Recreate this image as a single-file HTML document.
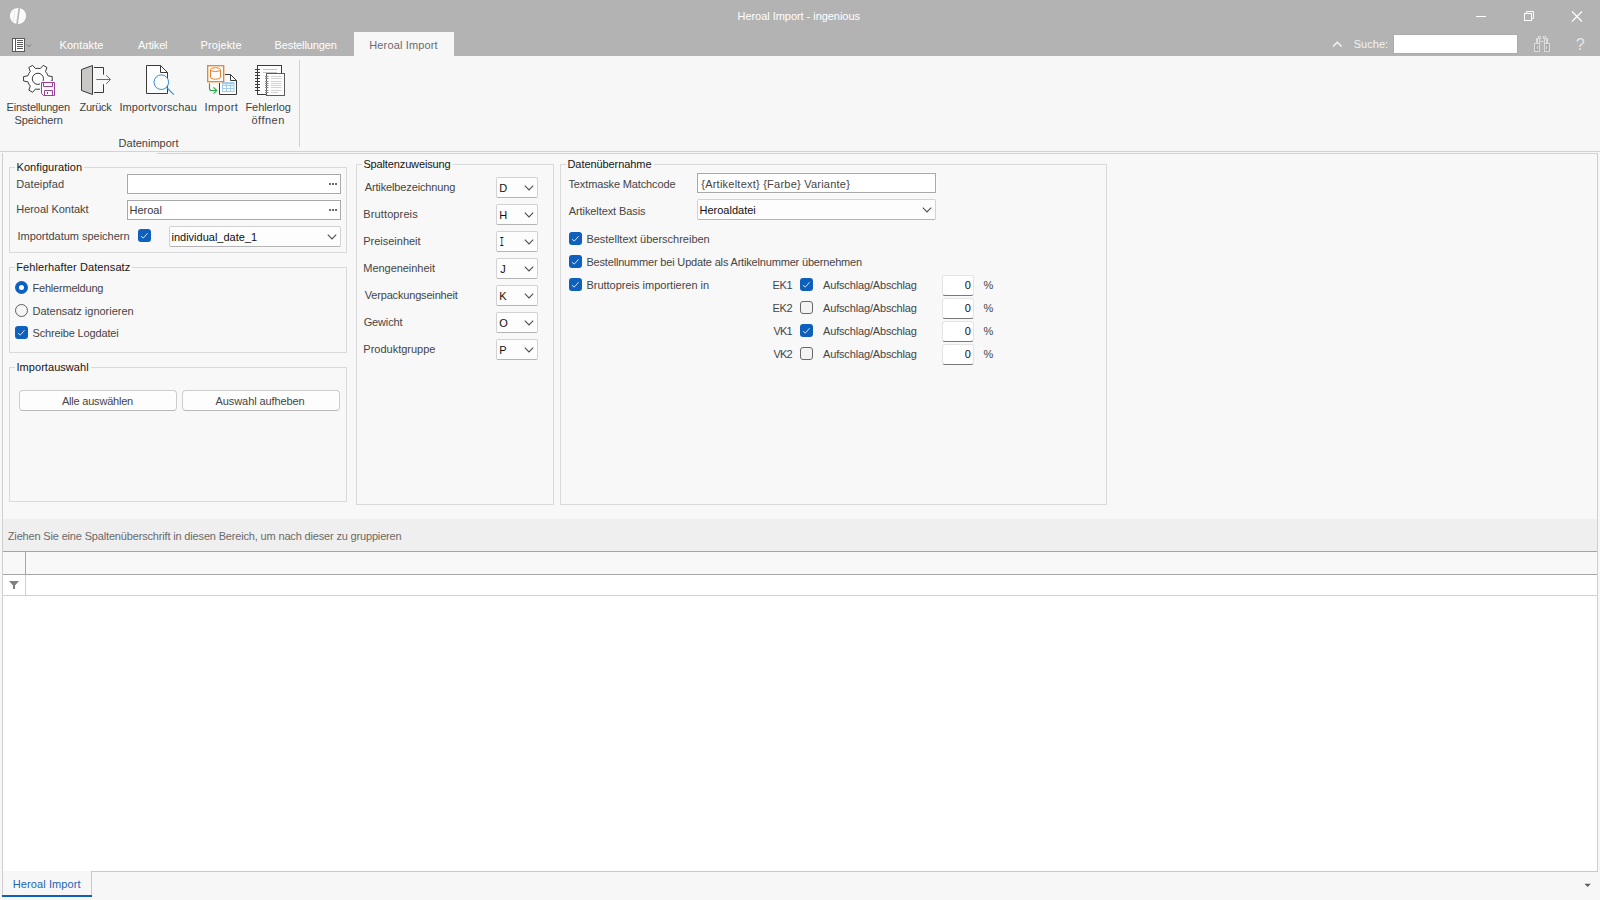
<!DOCTYPE html>
<html lang="de"><head><meta charset="utf-8"><title>Heroal Import - ingenious</title>
<style>
html,body{margin:0;padding:0}
body{width:1600px;height:900px;position:relative;overflow:hidden;background:#f7f7f7;font-family:"Liberation Sans",sans-serif;font-size:11px;line-height:13px}
.t{position:absolute;white-space:pre;font-size:11px;line-height:13px}
.b{position:absolute;box-sizing:border-box}
.grp{position:absolute;box-sizing:border-box;border:1px solid #dadada}
.gap{position:absolute;height:3px;background:#f8f8f8}
.inp{position:absolute;box-sizing:border-box;border:1px solid #a8a8a8;background:#fff;box-shadow:0 0 0 1px #fbfbfb}
.cmb{position:absolute;box-sizing:border-box;border:1px solid #d2d2d2;border-bottom-color:#b4b4b4;border-radius:2px;background:#fdfdfd}
.num{position:absolute;box-sizing:border-box;border:1px solid #e4e4e4;border-bottom:1px solid #787878;border-radius:3px;background:#fff;width:32px;height:21px}
.btn{position:absolute;box-sizing:border-box;border:1px solid #cdcdcd;border-bottom-color:#b8b8b8;border-radius:4px;background:#fdfdfd}
.cb{position:absolute;box-sizing:border-box;width:13px;height:13px;border-radius:3px;background:#0f5fbd}
.cb.off{background:#f3f3f3;border:1px solid #686868}
svg{position:absolute;overflow:visible}

</style></head>
<body>
<!-- title bar -->
<div class="b" style="left:0;top:0;width:1600px;height:56px;background:#b3b3b3"></div>
<div class="b" style="left:354px;top:32px;width:100px;height:24px;background:#f7f7f7"></div>
<div class="b" style="left:1393px;top:34px;width:125px;height:20px;background:#fff;border:1px solid #ababab"></div>
<svg style="left:0;top:0" width="1600" height="56" viewBox="0 0 1600 56">
  <!-- logo -->
  <circle cx="18" cy="16" r="8.1" fill="#fbfbfb"/>
  <path d="M14.800 10.200L13.400 21.500" stroke="#ececec" stroke-width="1" fill="none"/>
  <path d="M19.400 7.600L17.000 24.400" stroke="#b6b6b6" stroke-width="1.700" fill="none"/>
  <!-- menu icon -->
  <rect x="12.5" y="38.5" width="12" height="13" fill="#fff" stroke="#5a5a5a" stroke-width="1"/>
  <path d="M15.5 38.5V51.5" stroke="#5a5a5a" stroke-width="1"/>
  <path d="M17 40.5H23M17 42.5H23M17 44.5H23M17 46.5H23M17 48.5H23" stroke="#5a5a5a" stroke-width="1"/>
  <path d="M26.600 44.400L29 46.700L31.400 44.400" stroke="#7c7c7c" stroke-width="1" fill="none"/>
  <!-- window buttons -->
  <path d="M1476 16.5H1486" stroke="#fff" stroke-width="1"/>
  <path d="M1526.500 13.500V11.500H1533.500V18.500H1531.500" stroke="#fff" stroke-width="1" fill="none"/>
  <rect x="1524.500" y="13.500" width="7" height="7" stroke="#fff" stroke-width="1" fill="none"/>
  <path d="M1572 11.500L1582 21.500M1582 11.500L1572 21.500" stroke="#fff" stroke-width="1.1" fill="none"/>
  <!-- caret -->
  <path d="M1333 46.5L1337.300 42.200L1341.600 46.500" stroke="#f4f4f4" stroke-width="1.5" fill="none"/>
  <!-- binoculars -->
  <g stroke="#dcdcdc" stroke-width="1" fill="none">
    <rect x="1534.500" y="43.500" width="5" height="8" fill="#ababab"/>
    <rect x="1544.500" y="43.500" width="5" height="8" fill="#ababab"/>
    <rect x="1536.500" y="38.500" width="3" height="5"/>
    <rect x="1544.500" y="38.500" width="3" height="5"/>
    <rect x="1538.500" y="36.500" width="2" height="2"/>
    <rect x="1543.500" y="36.500" width="2" height="2"/>
    <path d="M1540.500 41.500H1543.500M1537.500 46V49M1546.500 46V49M1537.500 39V43M1546.500 39V43"/>
  </g>
</svg>
<!-- ribbon -->
<div class="b" style="left:0;top:151px;width:1600px;height:1px;background:#d3d3d3"></div>
<div class="b" style="left:299px;top:60px;width:1px;height:87px;background:#d2d2d2"></div>
<svg style="left:0;top:56px" width="320" height="95" viewBox="0 56 320 95">
  <!-- gear + floppy -->
  <g id="gear" fill="#fdfdfd" stroke="#3a3a3a" stroke-width="1">
    <path d="M47.96 75.80L52.24 76.63 L52.24 80.97 L47.96 81.80A10.5 10.5 0 0 1 45.53 86.01L46.95 90.13 L43.19 92.30 L40.33 89.01A10.5 10.5 0 0 1 35.47 89.01L32.61 92.30 L28.85 90.13 L30.27 86.01A10.5 10.5 0 0 1 27.84 81.80L23.56 80.97 L23.56 76.63 L27.84 75.80A10.5 10.5 0 0 1 30.27 71.59L28.85 67.47 L32.61 65.30 L35.47 68.59A10.5 10.5 0 0 1 40.33 68.59L43.19 65.30 L46.95 67.47 L45.53 71.59A10.5 10.5 0 0 1 47.96 75.80 Z"/>
    <circle cx="37.900" cy="78.800" r="5.600"/>
  </g>
  <rect x="40" y="81" width="16" height="16" fill="#f9f9f9"/>
  <g fill="#fdfdfd" stroke="#9c3f9c" stroke-width="1">
    <path d="M41.500 82.500H54.500V95.500H43.500L41.500 93.500Z"/>
    <path d="M43.500 82.500V86.500H52.500V82.500" fill="none"/>
    <path d="M44.500 95.500V90.500H52.500V95.500" fill="none"/>
    <path d="M47.500 92V94" fill="none"/>
  </g>
  <!-- door -->
  <path d="M81.500 69.500L92.500 65.500V94.500L81.500 90.500Z" fill="#c8c7c5" stroke="#3a3a3a" stroke-width="1"/>
  <path d="M94 67.500H103.500V74.700M103.500 84.200V92.500H94" fill="none" stroke="#3a3a3a" stroke-width="1"/>
  <path d="M96.300 79.500H110.200M106.200 75.200L110.500 79.500L106.200 83.800" fill="none" stroke="#e8373c" stroke-width="1"/>
  <!-- doc + magnifier -->
  <path d="M146.500 65.500H160.500L167.500 72.500V93.500H146.500Z" fill="#fdfdfd" stroke="#3a3a3a" stroke-width="1"/>
  <path d="M160.500 65.500V72.500H167.500" fill="none" stroke="#3a3a3a" stroke-width="1"/>
  <circle cx="161.300" cy="82.200" r="7.300" fill="#fdfdfd" stroke="#2f8fd3" stroke-width="1"/>
  <path d="M166.600 87.500L173.800 94.700" stroke="#2f8fd3" stroke-width="1.1" fill="none"/>
  <!-- import -->
  <path d="M219.500 83V94.500H236.500V80.500L230.500 74.500H225" fill="#fdfdfd" stroke="#3a3a3a" stroke-width="1"/>
  <path d="M230.500 74.500V80.500H236.500" fill="none" stroke="#3a3a3a" stroke-width="1"/>
  <g stroke="#a3cdea" stroke-width="1" fill="none">
    <rect x="222.500" y="82.500" width="11.500" height="9"/>
    <path d="M222.500 85.500H234M222.500 88.500H234M226.500 82.500V91.500M230.500 82.500V91.500"/>
    <path d="M222.500 83.500H234" stroke-width="1.500"/>
  </g>
  <rect x="207.700" y="65.700" width="16" height="16" fill="#fdfdfd" stroke="#e8802a" stroke-width="1.300"/>
  <g stroke="#e8802a" stroke-width="1" fill="none">
    <ellipse cx="215.500" cy="69.600" rx="5" ry="1.900"/>
    <path d="M210.500 69.600V77.200C210.500 79.800 220.500 79.800 220.500 77.200V69.600"/>
  </g>
  <path d="M209.500 83.200V88.500Q209.500 90.500 211.500 90.500H216.300M213.500 87.300L216.800 90.500L213.500 93.700" fill="none" stroke="#27a844" stroke-width="1.100"/>
  <!-- notebook -->
  <rect x="257.500" y="65.500" width="24" height="29" fill="#fdfdfd" stroke="#3a3a3a" stroke-width="1"/>
  <path d="M255 69.500H260M255 72.500H260M255 75.500H260M255 78.500H260M255 81.500H260M255 84.500H260M255 87.500H260M255 90.500H260" stroke="#3a3a3a" stroke-width="1"/>
  <path d="M263 69.500H277M263 72.500H277" stroke="#c4c4c4" stroke-width="1"/>
  <rect x="266.500" y="73.500" width="18" height="22" fill="#fdfdfd" stroke="#5c5c5c" stroke-width="1"/>
  <path d="M271 76.500H281.500M271 78.500H281.500M271 81.500H281.500M271 83.500H281.500M271 85.500H281.500M271 87.500H281.500M271 90.500H281.500M271 92.500H278" stroke="#d2d2d2" stroke-width="1"/>
  <path d="M265 76.500H268.500M265 78.500H268.500M265 81.500H268.500M265 83.500H268.500M265 85.500H268.500M265 87.500H268.500M265 90.500H268.500M265 92.500H268.500" stroke="#8a8a8a" stroke-width="1"/>
</svg>
<!-- content panel -->
<div class="b" style="left:2px;top:153px;width:1596px;height:719px;border-left:1px solid #cfcfcf;border-right:1px solid #cfcfcf;background:#f8f8f8"></div>
<div class="b" style="left:157px;top:153px;width:1441px;height:1px;background:#d3d3d3"></div>
<!-- group boxes -->
<div class="grp" style="left:9px;top:167px;width:338px;height:86px"></div>
<div class="grp" style="left:9px;top:267px;width:338px;height:86px"></div>
<div class="grp" style="left:9px;top:367px;width:338px;height:135px"></div>
<div class="grp" style="left:356px;top:164px;width:198px;height:341px"></div>
<div class="grp" style="left:560px;top:164px;width:547px;height:341px"></div>
<div class="gap" style="left:15px;top:166px;width:69px"></div>
<div class="gap" style="left:15px;top:266px;width:117px"></div>
<div class="gap" style="left:15px;top:366px;width:76px"></div>
<div class="gap" style="left:362px;top:163px;width:91px"></div>
<div class="gap" style="left:566px;top:163px;width:88px"></div>
<!-- Konfiguration -->
<div class="inp" style="left:127px;top:174px;width:214px;height:20px"></div>
<div class="inp" style="left:127px;top:200px;width:214px;height:20px"></div>
<svg style="left:0;top:0" width="1200" height="600" viewBox="0 0 1200 600">
  <g fill="#6a6a6a">
    <rect x="329" y="183" width="2" height="2"/><rect x="332" y="183" width="2" height="2"/><rect x="335" y="183" width="2" height="2"/>
    <rect x="329" y="209" width="2" height="2"/><rect x="332" y="209" width="2" height="2"/><rect x="335" y="209" width="2" height="2"/>
  </g>
</svg>
<div class="cb" style="left:138px;top:229px"></div>
<div class="cmb" style="left:169px;top:226px;width:172px;height:21px"></div>
<!-- Fehlerhafter -->
<div class="b" style="left:15px;top:281px;width:13px;height:13px;border-radius:50%;background:#0f5fbd"></div>
<div class="b" style="left:19px;top:285px;width:5px;height:5px;border-radius:50%;background:#fff"></div>
<div class="b" style="left:15px;top:304px;width:13px;height:13px;border-radius:50%;background:#f6f6f6;border:1px solid #5e5e5e"></div>
<div class="cb" style="left:15px;top:326px"></div>
<!-- Importauswahl -->
<div class="btn" style="left:19px;top:390px;width:158px;height:21px"></div>
<div class="btn" style="left:182px;top:390px;width:158px;height:21px"></div>
<!-- Spaltenzuweisung combos -->
<div class="cmb" style="left:496px;top:177px;width:42px;height:21px"></div>
<div class="cmb" style="left:496px;top:204px;width:42px;height:21px"></div>
<div class="cmb" style="left:496px;top:231px;width:42px;height:21px"></div>
<div class="cmb" style="left:496px;top:258px;width:42px;height:21px"></div>
<div class="cmb" style="left:496px;top:285px;width:42px;height:21px"></div>
<div class="cmb" style="left:496px;top:312px;width:42px;height:21px"></div>
<div class="cmb" style="left:496px;top:339px;width:42px;height:21px"></div>

<!-- Datenuebernahme -->
<div class="inp" style="left:697px;top:173px;width:239px;height:20px"></div>
<div class="cmb" style="left:697px;top:199px;width:239px;height:21px"></div>
<div class="cb" style="left:569px;top:232px"></div>
<div class="cb" style="left:569px;top:255px"></div>
<div class="cb" style="left:569px;top:278px"></div>
<div class="cb" style="left:800px;top:278px"></div>
<div class="cb off" style="left:800px;top:301px"></div>
<div class="cb" style="left:800px;top:324px"></div>
<div class="cb off" style="left:800px;top:347px"></div>
<div class="num" style="left:942px;top:275px"></div>
<div class="num" style="left:942px;top:298px"></div>
<div class="num" style="left:942px;top:321px"></div>
<div class="num" style="left:942px;top:344px"></div>
<!-- checks & chevrons -->
<svg style="left:0;top:0" width="1200" height="600" viewBox="0 0 1200 600">
  <g fill="none" stroke="#e6eef9" stroke-width="0.9">
    <path d="M141.0 236.2L143.3 238.1L147.6 233.2"/>
<path d="M18.0 333.2L20.3 335.1L24.6 330.2"/>
<path d="M572.0 239.2L574.3 241.1L578.6 236.2"/>
<path d="M572.0 262.2L574.3 264.1L578.6 259.2"/>
<path d="M572.0 285.2L574.3 287.1L578.6 282.2"/>
<path d="M803.0 285.2L805.3 287.1L809.6 282.2"/>
<path d="M803.0 331.2L805.3 333.1L809.6 328.2"/>

  </g>
  <g fill="none" stroke="#4c4c4c" stroke-width="1.05">
    <path d="M327.8 234.7L332.0 238.9L336.2 234.7"/>
<path d="M922.8 207.7L927.0 211.9L931.2 207.7"/>
<path d="M524.8 185.7L529.0 189.9L533.2 185.7"/>
<path d="M524.8 212.7L529.0 216.9L533.2 212.7"/>
<path d="M524.8 239.7L529.0 243.9L533.2 239.7"/>
<path d="M524.8 266.7L529.0 270.9L533.2 266.7"/>
<path d="M524.8 293.7L529.0 297.9L533.2 293.7"/>
<path d="M524.8 320.7L529.0 324.9L533.2 320.7"/>
<path d="M524.8 347.7L529.0 351.9L533.2 347.7"/>

  </g>
</svg>
<!-- grid -->
<div class="b" style="left:3px;top:519px;width:1594px;height:32px;background:#efefef"></div>
<div class="b" style="left:3px;top:551px;width:1594px;height:1px;background:#a6a6a6"></div>
<div class="b" style="left:3px;top:552px;width:1594px;height:22px;background:#f8f8f8"></div>
<div class="b" style="left:3px;top:574px;width:1594px;height:1px;background:#a6a6a6"></div>
<div class="b" style="left:3px;top:575px;width:1594px;height:296px;background:#fff"></div>
<div class="b" style="left:3px;top:595px;width:1594px;height:1px;background:#d0d0d0"></div>
<div class="b" style="left:25px;top:552px;width:1px;height:22px;background:#a6a6a6"></div>
<div class="b" style="left:25px;top:575px;width:1px;height:20px;background:#d0d0d0"></div>
<svg style="left:0;top:570px" width="40" height="30" viewBox="0 570 40 30">
  <path d="M9 581H19L15 585.400V589H13V585.400Z" fill="#808080"/>
</svg>
<!-- bottom tab strip -->
<div class="b" style="left:0;top:871px;width:1600px;height:29px;background:#f7f7f7"></div>
<div class="b" style="left:91px;top:871px;width:1507px;height:1px;background:#c9c9c9"></div>
<div class="b" style="left:2px;top:871px;width:90px;height:24px;border-left:1px solid #cfcfcf;border-right:1px solid #c9c9c9;background:#f7f7f7"></div>
<div class="b" style="left:2px;top:895px;width:90px;height:2px;background:#0f5fbd"></div>
<svg style="left:1580px;top:880px" width="16" height="10" viewBox="1580 880 16 10">
  <path d="M1584.500 883.800H1590.800L1587.650 887Z" fill="#5a5a5a"/>
</svg>

<!-- text -->
<span class="t" style="left:737.5px;top:10px;color:#ffffff;letter-spacing:-0.042px">Heroal Import - ingenious</span>
<span class="t" style="left:59.5px;top:39px;color:#ffffff;letter-spacing:0.071px">Kontakte</span>
<span class="t" style="left:138px;top:39px;color:#ffffff;letter-spacing:-0.167px">Artikel</span>
<span class="t" style="left:200.6px;top:39px;color:#ffffff;letter-spacing:0.1px">Projekte</span>
<span class="t" style="left:274.6px;top:39px;color:#ffffff;letter-spacing:-0.127px">Bestellungen</span>
<span class="t" style="left:369.3px;top:39px;color:#6b6b70;letter-spacing:0.133px">Heroal Import</span>
<span class="t" style="left:1353.7px;top:38px;color:#f2f2f2;letter-spacing:0.04px">Suche:</span>
<span class="t" style="left:1575.8px;top:36px;color:#e6e6e6;font-size:16px;line-height:18px">?</span>
<span class="t" style="left:6.6px;top:101px;color:#424242;letter-spacing:-0.217px">Einstellungen</span>
<span class="t" style="left:14.6px;top:114px;color:#424242;letter-spacing:-0.15px">Speichern</span>
<span class="t" style="left:79.6px;top:101px;color:#424242;letter-spacing:-0.28px">Zurück</span>
<span class="t" style="left:119.4px;top:101px;color:#424242;letter-spacing:0.123px">Importvorschau</span>
<span class="t" style="left:204.6px;top:101px;color:#424242;letter-spacing:0.4px">Import</span>
<span class="t" style="left:245.4px;top:101px;color:#424242;letter-spacing:-0.05px">Fehlerlog</span>
<span class="t" style="left:251.4px;top:114px;color:#424242;letter-spacing:0.52px">öffnen</span>
<span class="t" style="left:118.6px;top:137px;color:#424242">Datenimport</span>
<span class="t" style="left:16.5px;top:161px;color:#151515;letter-spacing:0.062px">Konfiguration</span>
<span class="t" style="left:16.25px;top:178px;color:#454545;letter-spacing:0.094px">Dateipfad</span>
<span class="t" style="left:16.25px;top:203px;color:#454545;letter-spacing:-0.038px">Heroal Kontakt</span>
<span class="t" style="left:129.6px;top:204px;color:#3a3a3a;letter-spacing:-0.02px">Heroal</span>
<span class="t" style="left:17.5px;top:230px;color:#454545;letter-spacing:-0.025px">Importdatum speichern</span>
<span class="t" style="left:171.5px;top:231px;color:#101010">individual_date_1</span>
<span class="t" style="left:16.25px;top:261px;color:#151515;letter-spacing:0.102px">Fehlerhafter Datensatz</span>
<span class="t" style="left:32.5px;top:282px;color:#454545;letter-spacing:-0.2px">Fehlermeldung</span>
<span class="t" style="left:32.5px;top:305px;color:#454545;letter-spacing:-0.021px">Datensatz ignorieren</span>
<span class="t" style="left:32.5px;top:327px;color:#454545;letter-spacing:-0.15px">Schreibe Logdatei</span>
<span class="t" style="left:16.5px;top:361px;color:#151515;letter-spacing:0.05px">Importauswahl</span>
<span class="t" style="left:61.9px;top:395px;color:#454545;letter-spacing:-0.204px">Alle auswählen</span>
<span class="t" style="left:215.6px;top:395px;color:#454545;letter-spacing:-0.093px">Auswahl aufheben</span>
<span class="t" style="left:363.4px;top:158px;color:#151515;letter-spacing:-0.133px">Spaltenzuweisung</span>
<span class="t" style="left:364.7px;top:181px;color:#454545;letter-spacing:-0.129px">Artikelbezeichnung</span>
<span class="t" style="left:499.2px;top:182px;color:#101010">D</span>
<span class="t" style="left:363.3px;top:208px;color:#454545;letter-spacing:0.12px">Bruttopreis</span>
<span class="t" style="left:499.2px;top:209px;color:#101010">H</span>
<span class="t" style="left:363.3px;top:235px;color:#454545;letter-spacing:-0.018px">Preiseinheit</span>
<span class="t" style="left:499.2px;top:236px;color:#101010;font-size:12px;line-height:14px;font-family:'Liberation Mono',monospace;transform:scaleX(.62);transform-origin:1.0px 0">I</span>
<span class="t" style="left:363.3px;top:262px;color:#454545;letter-spacing:-0.042px">Mengeneinheit</span>
<span class="t" style="left:500.2px;top:263px;color:#101010">J</span>
<span class="t" style="left:364.7px;top:289px;color:#454545;letter-spacing:-0.171px">Verpackungseinheit</span>
<span class="t" style="left:499.2px;top:290px;color:#101010">K</span>
<span class="t" style="left:363.7px;top:316px;color:#454545;letter-spacing:-0.15px">Gewicht</span>
<span class="t" style="left:499.2px;top:317px;color:#101010">O</span>
<span class="t" style="left:363.3px;top:343px;color:#454545">Produktgruppe</span>
<span class="t" style="left:499.2px;top:344px;color:#101010">P</span>
<span class="t" style="left:567.5px;top:158px;color:#151515;letter-spacing:-0.077px">Datenübernahme</span>
<span class="t" style="left:568.5px;top:178px;color:#454545;letter-spacing:-0.133px">Textmaske Matchcode</span>
<span class="t" style="left:701.25px;top:178px;color:#444;letter-spacing:0.232px">{Artikeltext} {Farbe} Variante}</span>
<span class="t" style="left:568.8px;top:205px;color:#454545;letter-spacing:-0.094px">Artikeltext Basis</span>
<span class="t" style="left:699.5px;top:204px;color:#101010">Heroaldatei</span>
<span class="t" style="left:586.4px;top:233px;color:#454545;letter-spacing:-0.008px">Bestelltext überschreiben</span>
<span class="t" style="left:586.4px;top:256px;color:#454545;letter-spacing:-0.176px">Bestellnummer bei Update als Artikelnummer übernehmen</span>
<span class="t" style="left:586.4px;top:279px;color:#454545;letter-spacing:-0.004px">Bruttopreis importieren in</span>
<span class="t" style="left:772.5px;top:279px;color:#454545;letter-spacing:-0.35px">EK1</span>
<span class="t" style="left:823px;top:279px;color:#454545;letter-spacing:-0.159px">Aufschlag/Abschlag</span>
<span class="t" style="left:964.75px;top:279px;color:#101010">0</span>
<span class="t" style="left:983.5px;top:279px;color:#454545">%</span>
<span class="t" style="left:772.5px;top:302px;color:#454545;letter-spacing:-0.35px">EK2</span>
<span class="t" style="left:823px;top:302px;color:#454545;letter-spacing:-0.159px">Aufschlag/Abschlag</span>
<span class="t" style="left:964.75px;top:302px;color:#101010">0</span>
<span class="t" style="left:983.5px;top:302px;color:#454545">%</span>
<span class="t" style="left:773.5px;top:325px;color:#454545;letter-spacing:-0.85px">VK1</span>
<span class="t" style="left:823px;top:325px;color:#454545;letter-spacing:-0.159px">Aufschlag/Abschlag</span>
<span class="t" style="left:964.75px;top:325px;color:#101010">0</span>
<span class="t" style="left:983.5px;top:325px;color:#454545">%</span>
<span class="t" style="left:773.5px;top:348px;color:#454545;letter-spacing:-0.85px">VK2</span>
<span class="t" style="left:823px;top:348px;color:#454545;letter-spacing:-0.159px">Aufschlag/Abschlag</span>
<span class="t" style="left:964.75px;top:348px;color:#101010">0</span>
<span class="t" style="left:983.5px;top:348px;color:#454545">%</span>
<span class="t" style="left:7.8px;top:530px;color:#6a6a6a;letter-spacing:-0.165px">Ziehen Sie eine Spaltenüberschrift in diesen Bereich, um nach dieser zu gruppieren</span>
<span class="t" style="left:12.75px;top:878px;color:#1a64b8;letter-spacing:0.104px">Heroal Import</span>
</body></html>
